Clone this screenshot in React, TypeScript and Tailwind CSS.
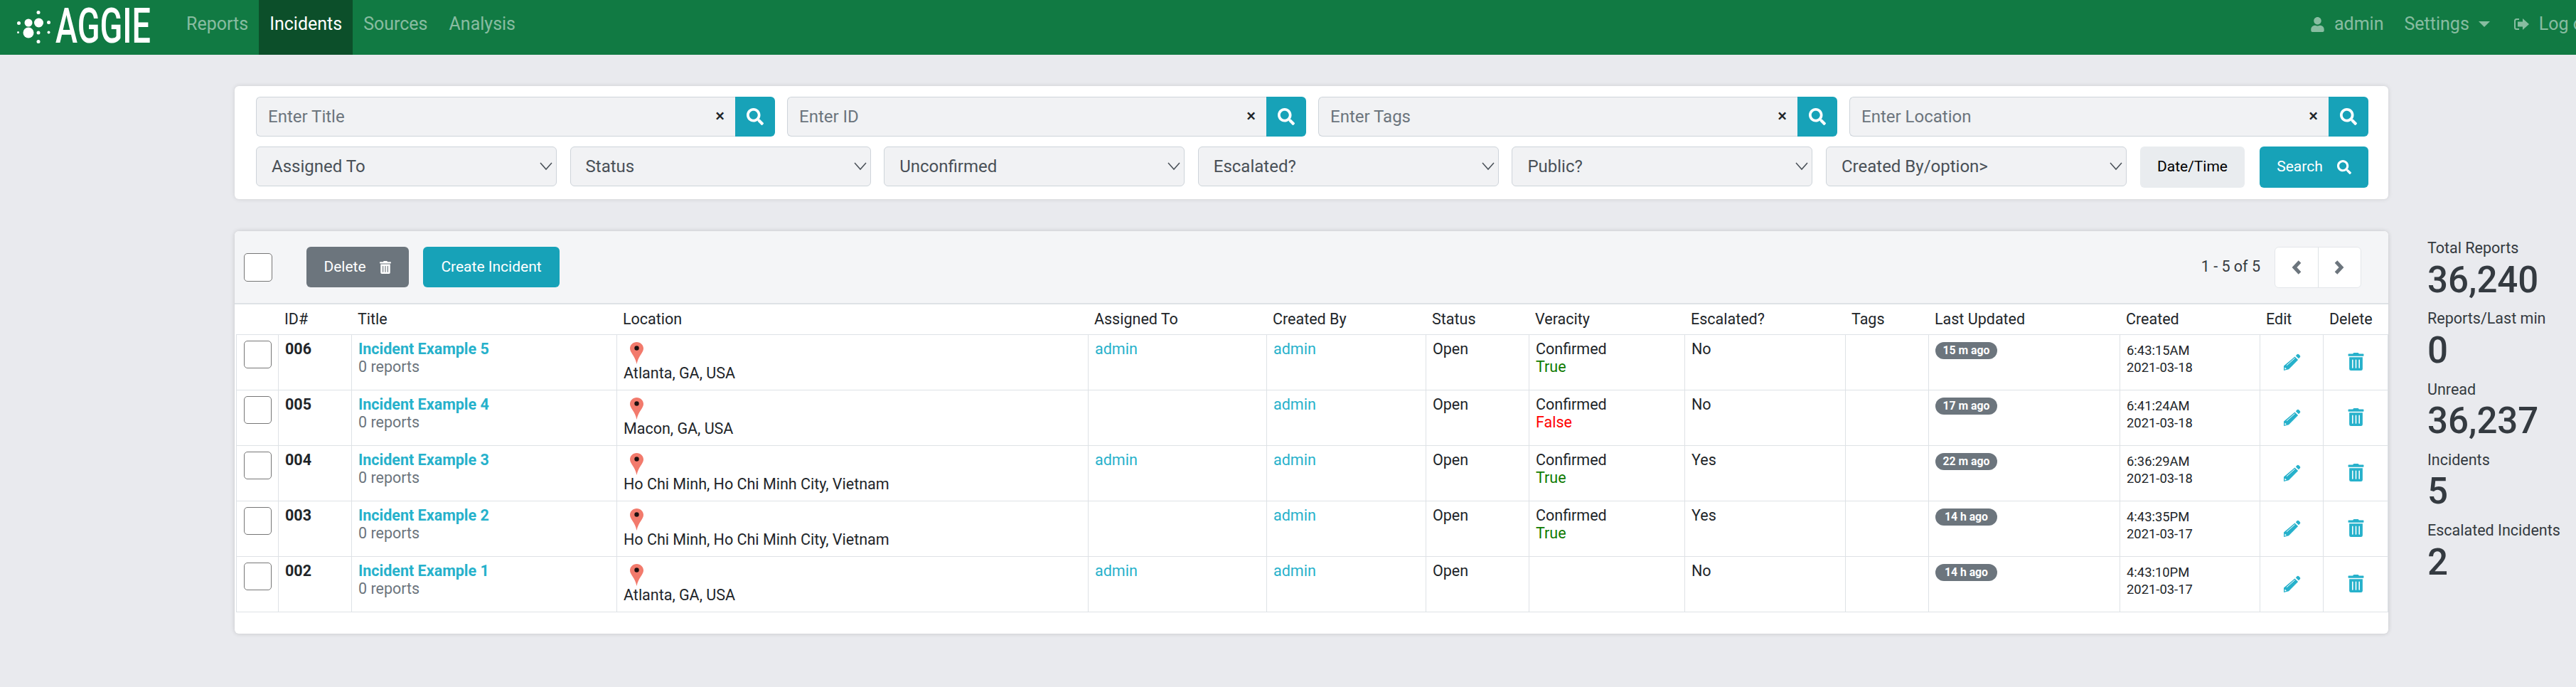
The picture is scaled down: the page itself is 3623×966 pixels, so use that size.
import { FaSearch, FaTrashAlt, FaUser } from "react-icons/fa";

const incidents = [
  { id: "006", title: "Incident Example 5", location: "Atlanta, GA, USA", assigned: "admin", veracity: "True", escalated: "No", updated: "15 m ago", time: "6:43:15AM", date: "2021-03-18" },
  { id: "005", title: "Incident Example 4", location: "Macon, GA, USA", assigned: "", veracity: "False", escalated: "No", updated: "17 m ago", time: "6:41:24AM", date: "2021-03-18" },
  { id: "004", title: "Incident Example 3", location: "Ho Chi Minh, Ho Chi Minh City, Vietnam", assigned: "admin", veracity: "True", escalated: "Yes", updated: "22 m ago", time: "6:36:29AM", date: "2021-03-18" },
  { id: "003", title: "Incident Example 2", location: "Ho Chi Minh, Ho Chi Minh City, Vietnam", assigned: "", veracity: "True", escalated: "Yes", updated: "14 h ago", time: "4:43:35PM", date: "2021-03-17" },
  { id: "002", title: "Incident Example 1", location: "Atlanta, GA, USA", assigned: "admin", veracity: "", escalated: "No", updated: "14 h ago", time: "4:43:10PM", date: "2021-03-17" },
];

const stats = [
  { label: "Total Reports", value: "36,240" },
  { label: "Reports/Last min", value: "0" },
  { label: "Unread", value: "36,237" },
  { label: "Incidents", value: "5" },
  { label: "Escalated Incidents", value: "2" },
];

// the wordmark is a narrowed text: a nested svg squeezes it horizontally
const Logo = () => (
  <svg width="247" height="77" viewBox="0 0 247 77" className="block shrink-0" fill="white">
    <circle cx="40" cy="32" r="5.500" />
    <circle cx="54.500" cy="32" r="6.500" />
    <circle cx="40" cy="46" r="7.500" />
    <circle cx="54" cy="46" r="2.500" />
    <circle cx="54" cy="17.500" r="2.500" />
    <circle cx="54" cy="58.500" r="2.500" />
    <circle cx="26.500" cy="32.500" r="2.500" />
    <circle cx="25.500" cy="45.500" r="1.500" />
    <circle cx="68.500" cy="31.500" r="2.500" />
    <circle cx="68.500" cy="45.500" r="2" />
    <svg x="78" y="0" width="134" height="77" viewBox="0 0 198 77" preserveAspectRatio="none" overflow="visible">
      <text x="0" y="60" fontSize="69" fontWeight="500">AGGIE</text>
    </svg>
  </svg>
);

const LogoutIcon = () => (
  <svg width="22" height="20" viewBox="0 0 22 20" fill="currentColor" className="block">
    <path d="M8 2H4.500A3.500 3.500 0 0 0 1 5.500v9A3.500 3.500 0 0 0 4.500 18H8v-2H4.500A1.500 1.500 0 0 1 3 14.500v-9A1.500 1.500 0 0 1 4.500 4H8z" />
    <path d="M13 2l9 8-9 8v-4.500H6v-7h7z" />
  </svg>
);

const Pin = () => (
  <svg width="19" height="31" viewBox="0 0 19 31" className="block">
    <path d="M9.500 0C4.200 0 0 4 0 9c0 6 7 10 9.500 22C12 19 19 15 19 9c0-5-4.200-9-9.500-9z" fill="#f27a6c" />
    <circle cx="9.500" cy="8.500" r="3.200" fill="#1c1010" />
  </svg>
);

const PencilIcon = () => (
  <svg width="25" height="24" viewBox="0 0 25 24" fill="currentColor" className="block">
    <path d="M17.800 3.200l1.700-1.800c.9-.9 1.900-.9 2.800 0l1.300 1.300c.9.900.9 1.900 0 2.800l-1.700 1.700z" />
    <path d="M16.500 4.500l4.600 4.600L8 22.200 1 24v-6.400z" />
    <path d="M5 16.800L16.500 6.600" stroke="white" strokeWidth="1" />
    <path d="M2.600 19.500l2.300 2.200-2.800.7z" fill="white" />
  </svg>
);

const Chevron = ({ d }: { d: string }) => (
  <svg width="14" height="20" viewBox="0 0 14 20" fill="none" stroke="currentColor" strokeWidth="5" className="block">
    <path d={d} />
  </svg>
);

const TextFilter = ({ placeholder }: { placeholder: string }) => (
  <div className="flex w-[730px] h-[56px]">
    <div className="flex-1 flex items-center justify-between bg-[#f1f2f4] border border-r-0 border-[#ced4da] rounded-l-[6px] pl-[16px] pr-[15px]">
      <span className="text-[24px] text-[#6c757d]">{placeholder}</span>
      <span className="text-[24px] leading-none font-medium text-[#212529] -mt-[3px]">×</span>
    </div>
    <button className="w-[56px] flex items-center justify-center bg-[#17a2b8] rounded-r-[6px] text-white">
      <FaSearch size={24} />
    </button>
  </div>
);

const SelectFilter = ({ label }: { label: string }) => (
  <div className="w-[423px] h-[56px] flex items-center justify-between bg-[#f1f2f4] border border-[#ced4da] rounded-[6px] pl-[21px] pr-[5px] text-[24px] text-[#495057]">
    <span>{label}</span>
    <svg width="18" height="12" viewBox="0 0 18 12" fill="none" stroke="#495057" strokeWidth="1.500">
      <path d="M1 1l8 9 8-9" />
    </svg>
  </div>
);

const FilterCard = () => (
  <div className="w-[3029px] h-[159px] bg-white rounded-[6px] shadow-[0_0_6px_rgba(0,0,0,0.12)] pl-[30px] pr-[28px] pt-[15px] flex flex-col gap-[14px]">
    <div className="flex justify-between">
      <TextFilter placeholder="Enter Title" />
      <TextFilter placeholder="Enter ID" />
      <TextFilter placeholder="Enter Tags" />
      <TextFilter placeholder="Enter Location" />
    </div>
    <div className="flex items-start">
      <div className="flex gap-[18.600px]">
        <SelectFilter label="Assigned To" />
        <SelectFilter label="Status" />
        <SelectFilter label="Unconfirmed" />
        <SelectFilter label="Escalated?" />
        <SelectFilter label="Public?" />
        <SelectFilter label="Created By/option>" />
      </div>
      <button className="ml-[19px] w-[147px] h-[58px] bg-[#e9ecef] rounded-[6px] text-[21px] text-black">Date/Time</button>
      <button className="ml-[21px] w-[153px] h-[58px] bg-[#17a2b8] rounded-[6px] text-[21px] text-white flex items-center justify-center gap-[20px]">
        Search <FaSearch size={20} />
      </button>
    </div>
  </div>
);

const td = "border border-[#dee2e6] align-top px-[9px] text-[21.500px] leading-[31.500px]";
const dark = "pt-[4px] text-[#212529]";
const link = "pt-[4px] text-[#26b1cb]";

const IncidentTable = () => (
  <table className="w-[3026px] table-fixed border-collapse">
    <colgroup>
      <col className="w-[59px]" />
      <col className="w-[103px]" />
      <col className="w-[373px]" />
      <col className="w-[663px]" />
      <col className="w-[251px]" />
      <col className="w-[224px]" />
      <col className="w-[145px]" />
      <col className="w-[219px]" />
      <col className="w-[226px]" />
      <col className="w-[117px]" />
      <col className="w-[269px]" />
      <col className="w-[197px]" />
      <col className="w-[89px]" />
      <col className="w-[91px]" />
    </colgroup>
    <thead>
      <tr className="h-[42px]">
        {["", "ID#", "Title", "Location", "Assigned To", "Created By", "Status", "Veracity", "Escalated?", "Tags", "Last Updated", "Created", "Edit", "Delete"].map((h) => (
          <th key={h} className="text-left font-normal text-[21.500px] text-[#212529] px-[8.500px] py-0">{h}</th>
        ))}
      </tr>
    </thead>
    <tbody>
      {incidents.map((item) => (
        <tr key={item.id} className="h-[78px]">
          <td className="border border-[#dee2e6] align-top pl-[10px] pt-[8px]">
            <div className="w-[39px] h-[39px] bg-white border border-[#767676] rounded-[5px]" />
          </td>
          <td className={`${td} ${dark} font-bold`}>{item.id}</td>
          <td className={`${td} pt-[4px]`}>
            <div className="font-bold text-[#26b1cb]">{item.title}</div>
            <div className="text-[#6c757d] -mt-[6px]">0 reports</div>
          </td>
          <td className={`${td} pt-[10px] text-[#212529]`}>
            <div className="pl-[9px]"><Pin /></div>
            <div className="-mt-[3px]">{item.location}</div>
          </td>
          <td className={`${td} ${link}`}>{item.assigned}</td>
          <td className={`${td} ${link}`}>admin</td>
          <td className={`${td} ${dark}`}>Open</td>
          <td className={`${td} ${dark}`}>
            {item.veracity && (
              <>
                <div>Confirmed</div>
                <div className={`-mt-[6px] ${item.veracity === "True" ? "text-[#0f7a00]" : "text-[#ff0000]"}`}>{item.veracity}</div>
              </>
            )}
          </td>
          <td className={`${td} ${dark}`}>{item.escalated}</td>
          <td className={`${td} ${dark}`}></td>
          <td className={`${td} pt-[10px]`}>
            <span className="block w-[87px] h-[24px] bg-[#6c757d] text-white rounded-full text-[15.750px] font-bold leading-[24px] text-center">{item.updated}</span>
          </td>
          <td className={`${td} pt-[6px] text-[#212529]`}>
            <div className="text-[18.400px]">{item.time}</div>
            <div className="text-[18.400px] -mt-[7px]">{item.date}</div>
          </td>
          <td className={`${td} pt-[26px] text-[#26b1cb]`}>
            <div className="flex justify-center"><PencilIcon /></div>
          </td>
          <td className={`${td} pt-[25px] text-[#26b1cb]`}>
            <div className="flex justify-center"><FaTrashAlt size={25} /></div>
          </td>
        </tr>
      ))}
    </tbody>
  </table>
);

const IncidentCard = () => (
  <div className="w-[3029px] h-[566px] mt-[45px] bg-white rounded-[6px] shadow-[0_0_6px_rgba(0,0,0,0.16)] overflow-hidden pl-[2px]">
    <div className="-ml-[2px] h-[103px] bg-[#f4f5f7] border-b-2 border-[#dee2e6] flex items-center pl-[13px] pr-[38px]">
      <div className="w-[40px] h-[40px] bg-white border border-[#767676] rounded-[5px]" />
      <button className="ml-[48px] w-[144px] h-[57px] bg-[#6c757d] rounded-[6px] text-white text-[21px] flex items-center justify-center gap-[18px]">
        Delete <FaTrashAlt size={18} />
      </button>
      <button className="ml-[20px] w-[192px] h-[57px] bg-[#17a2b8] rounded-[6px] text-white text-[21px]">Create Incident</button>
      <span className="ml-auto text-[21.500px] text-[#343a40]">1 - 5 of 5</span>
      <div className="ml-[20px] w-[122px] h-[58px] flex bg-white border border-[#e3e6ea] rounded-[6px] text-[#6c757d]">
        <button className="flex-1 flex items-center justify-center border-r border-[#dee2e6]"><Chevron d="M11.500 2L4 10l7.500 8" /></button>
        <button className="flex-1 flex items-center justify-center"><Chevron d="M2.500 2L10 10l-7.500 8" /></button>
      </div>
    </div>
    <IncidentTable />
  </div>
);

const Stats = () => (
  <div className="ml-[55px] mt-[256px] w-[205px] shrink-0 text-[#343a40]">
    {stats.map((s) => (
      <div key={s.label} className="h-[99.300px] whitespace-nowrap">
        <div className="text-[21.500px] leading-[31.500px]">{s.label}</div>
        <div className="text-[51px] font-medium leading-[58px]">{s.value}</div>
      </div>
    ))}
  </div>
);

export default function App() {
  return (
    <div className="font-['Roboto',sans-serif] w-[3623px] h-[966px] bg-[#e9eaee] overflow-hidden">
      <nav className="h-[77px] bg-[#117a43] flex items-stretch text-[25px] whitespace-nowrap">
        <Logo />
        <a className="px-[15px] pb-[9px] flex items-center text-white/50">Reports</a>
        <a className="px-[15px] pb-[9px] flex items-center text-white bg-[#0c4f2a]">Incidents</a>
        <a className="px-[15px] pb-[9px] flex items-center text-white/50">Sources</a>
        <a className="px-[15px] pb-[9px] flex items-center text-white/50">Analysis</a>
        <div className="ml-auto pb-[9px] flex items-center text-white/50 w-[374px] shrink-0">
          <FaUser size={21} className="shrink-0" />
          <span className="ml-[13px]">admin</span>
          <span className="ml-[29px]">Settings</span>
          <span className="ml-[13px] shrink-0 w-0 h-0 border-x-[8px] border-x-transparent border-t-[8px] border-t-white/50" />
          <span className="ml-[33px] shrink-0"><LogoutIcon /></span>
          <span className="ml-[14px] shrink-0">Log out</span>
        </div>
      </nav>
      <div className="flex pl-[330px] items-start">
        <div className="pt-[44px]">
          <FilterCard />
          <IncidentCard />
        </div>
        <Stats />
      </div>
    </div>
  );
}
